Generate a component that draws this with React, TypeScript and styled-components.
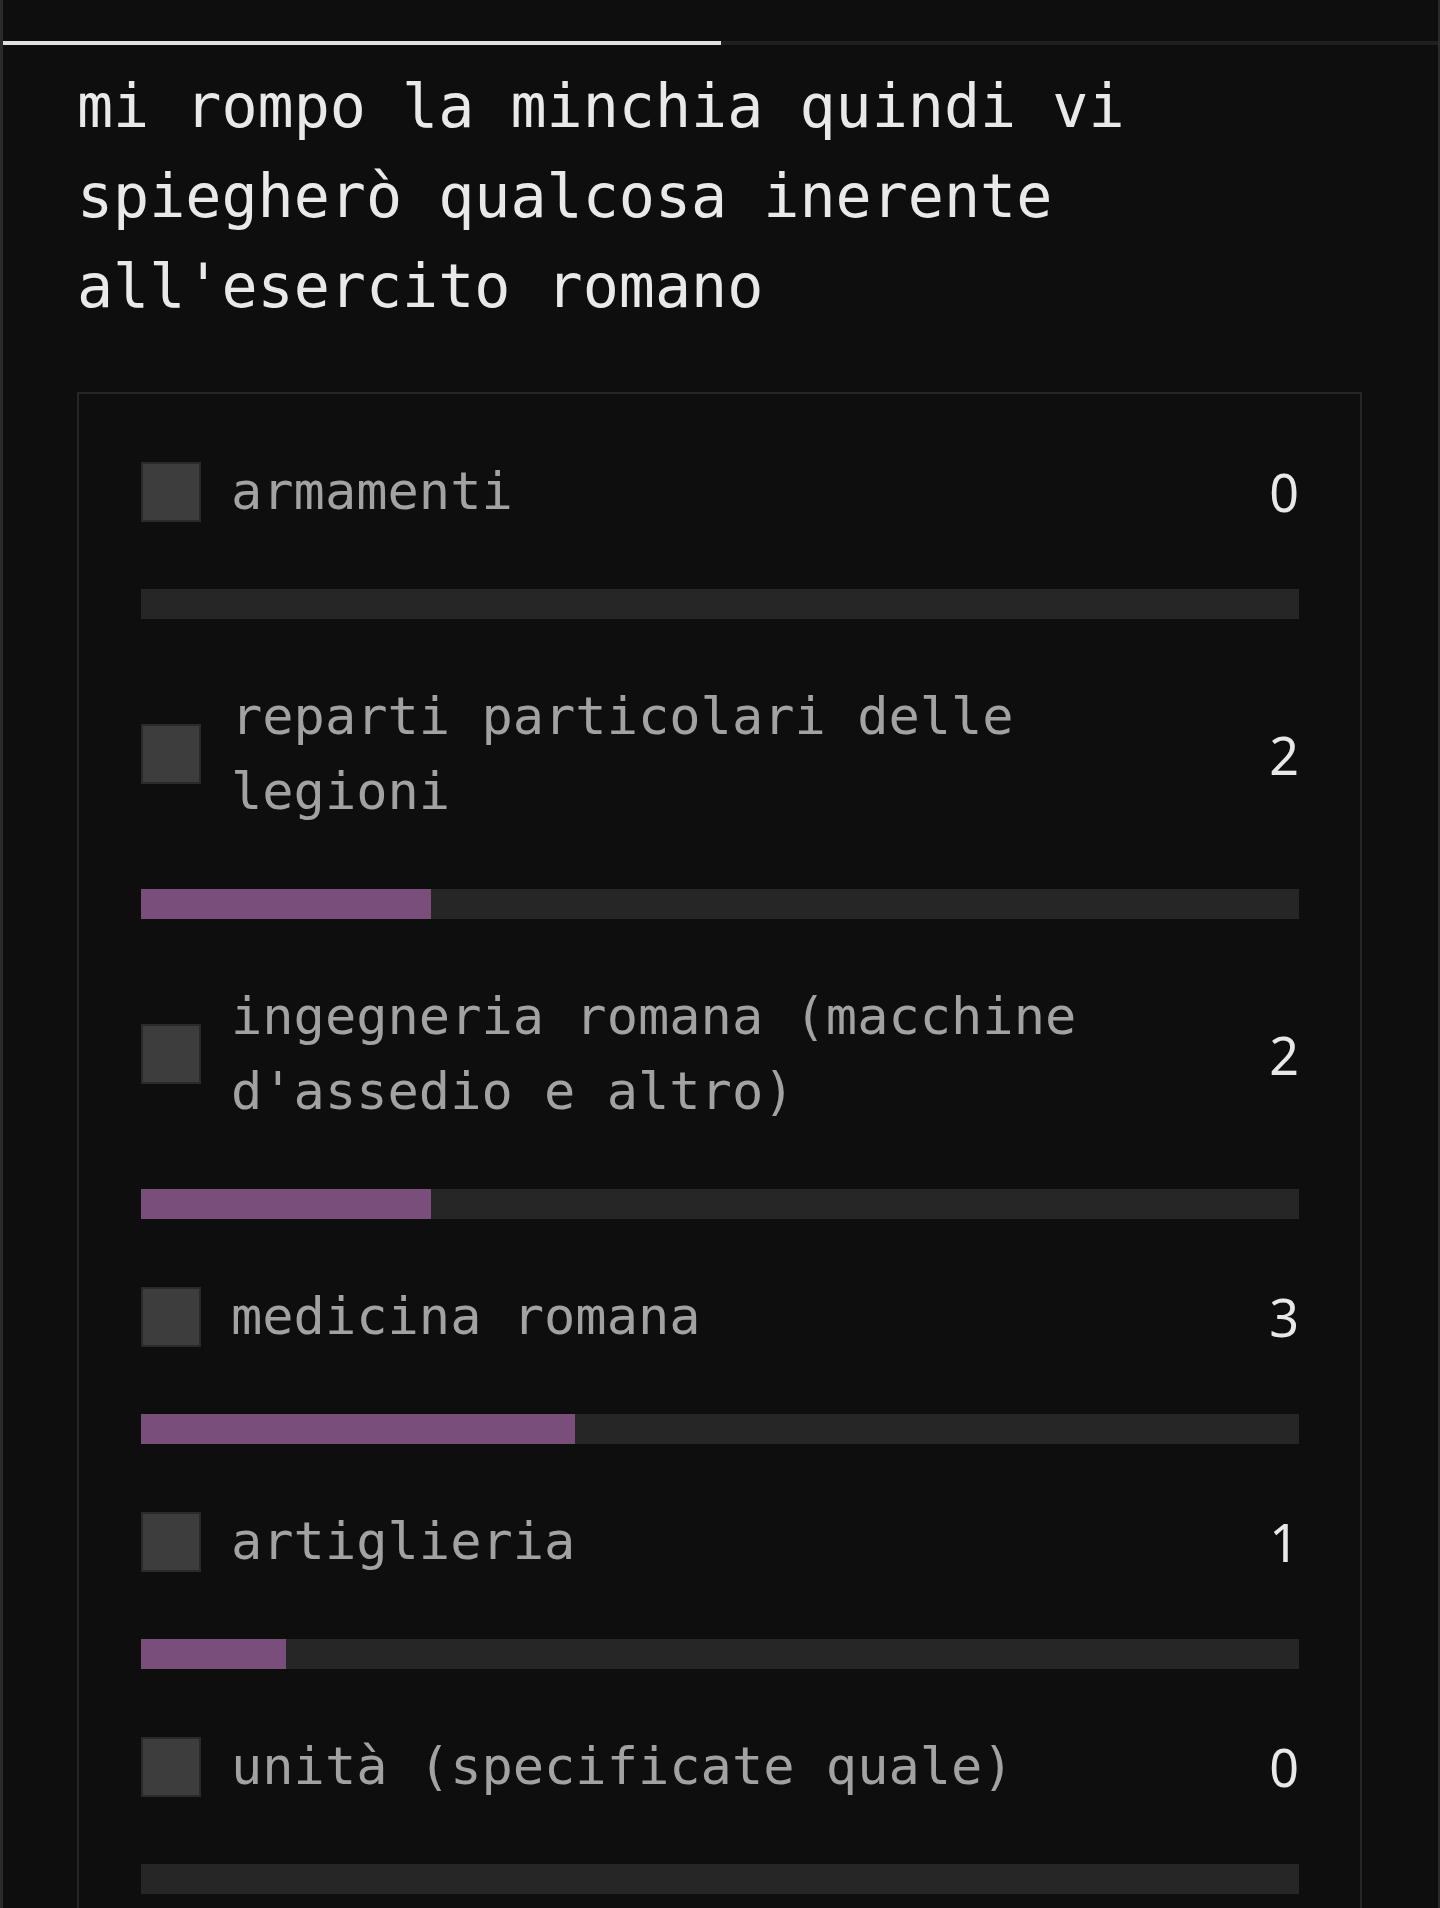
import React from "react";
import styled, { createGlobalStyle } from "styled-components";

const GlobalStyle = createGlobalStyle`
  html, body {
    margin: 0;
    padding: 0;
    background: #0e0e0e;
  }
  * { box-sizing: border-box; }
`;

const Page = styled.div`
  min-height: 1908px;
  background: #0e0e0e;
  border-left: 3px solid #2b2b2b;
  border-right: 2px solid #2b2b2b;
  font-family: "DejaVu Sans Mono", "Liberation Mono", monospace;
`;

const Tabs = styled.div`
  display: flex;
  height: 45px;
  border-bottom: 4px solid #1f1f1f;
`;

const Tab = styled.div<{ $active?: boolean }>`
  flex: 1;
  margin-bottom: -4px;
  border-bottom: 4px solid ${(p) => (p.$active ? "#e2e2e2" : "transparent")};
`;

const Content = styled.div`
  padding: 16px 76px 0 74px;
`;

const Question = styled.p`
  margin: 0;
  font-size: 60px;
  line-height: 90px;
  color: #e9e9e9;
`;

const Card = styled.div`
  margin-top: 61px;
  border: 2px solid #262626;
  padding: 60px 61px 60px 62px;
  display: flex;
  flex-direction: column;
  gap: 60px;
`;

const Option = styled.div`
  display: flex;
  flex-direction: column;
  gap: 60px;
`;

const Row = styled.label`
  display: flex;
  align-items: center;
`;

const Check = styled.input`
  appearance: none;
  -webkit-appearance: none;
  margin: 0;
  flex: none;
  width: 60px;
  height: 60px;
  background: #3d3d3d;
  border: 2px solid #2a2a2a;
`;

const Label = styled.span`
  flex: 1;
  margin-left: 30px;
  font-size: 52px;
  line-height: 75px;
  color: #a2a2a2;
`;

const Count = styled.span`
  margin-left: 30px;
  font-family: "Noto Sans", "Open Sans", sans-serif;
  font-size: 52px;
  line-height: 75px;
  color: #e8e8e8;
  text-align: right;
`;

const Track = styled.div`
  height: 30px;
  background: #262626;
`;

const Fill = styled.div`
  height: 100%;
  background: #7a4e7a;
`;

const options = [
  { label: "armamenti", votes: 0 },
  { label: "reparti particolari delle legioni", votes: 2 },
  { label: "ingegneria romana (macchine d'assedio e altro)", votes: 2 },
  { label: "medicina romana", votes: 3 },
  { label: "artiglieria", votes: 1 },
  { label: "unità (specificate quale)", votes: 0 },
];

export default function App() {
  const total = options.reduce((s, o) => s + o.votes, 0);
  return (
    <>
      <GlobalStyle />
      <Page>
        <Tabs>
          <Tab $active />
          <Tab />
        </Tabs>
        <Content>
          <Question>
            mi rompo la minchia quindi vi spiegherò qualcosa inerente
            all'esercito romano
          </Question>
          <Card>
            {options.map((o) => (
              <Option key={o.label}>
                <Row>
                  <Check type="checkbox" />
                  <Label>{o.label}</Label>
                  <Count>{o.votes}</Count>
                </Row>
                <Track>
                  <Fill style={{ width: `${(o.votes / total) * 100}%` }} />
                </Track>
              </Option>
            ))}
          </Card>
        </Content>
      </Page>
    </>
  );
}
